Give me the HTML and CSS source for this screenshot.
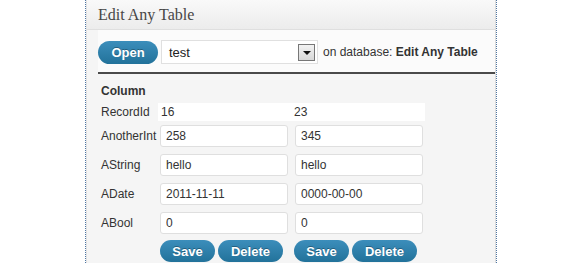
FILE: index.html
```html
<!DOCTYPE html>
<html>
<head>
  <title>Edit Any Table</title>
  <link rel="stylesheet" href="styles.css">
</head>
<body>
  <div class="frame">
    <div class="panel">
      <h3 class="panel-title">Edit Any Table</h3>

      <div class="toolbar">
        <button class="btn btn-open">Open</button>
        <div class="select">
          <span>test</span>
          <span class="select-arrow"></span>
        </div>
        <span class="db-label">on database: <b>Edit Any Table</b></span>
      </div>

      <div class="records">
        <div class="row row-head">
          <span class="label">Column</span>
        </div>
        <div class="row row-id">
          <span class="label">RecordId</span>
          <span class="id-cell">16</span>
          <span class="id-cell">23</span>
        </div>
        <div class="row">
          <span class="label">AnotherInt</span>
          <input type="text" value="258">
          <input type="text" value="345">
        </div>
        <div class="row">
          <span class="label">AString</span>
          <input type="text" value="hello">
          <input type="text" value="hello">
        </div>
        <div class="row">
          <span class="label">ADate</span>
          <input type="text" value="2011-11-11">
          <input type="text" value="0000-00-00">
        </div>
        <div class="row">
          <span class="label">ABool</span>
          <input type="text" value="0">
          <input type="text" value="0">
        </div>
        <div class="row row-actions">
          <span></span>
          <div class="actions">
            <button class="btn btn-save">Save</button>
            <button class="btn btn-delete">Delete</button>
          </div>
          <div class="actions actions-right">
            <button class="btn btn-save">Save</button>
            <button class="btn btn-delete">Delete</button>
          </div>
        </div>
      </div>
    </div>
  </div>
</body>
</html>
```

FILE: styles.css
```css
body {
  margin: 0;
  padding: 0;
  background: #fff;
  font-family: 'Liberation Sans', Arial, sans-serif;
  font-size: 12px;
  color: #333;
}

.frame {
  margin-left: 85px;
  width: 410px;
  border-left: 1px dotted #4f76a3;
  border-right: 1px dotted #4f76a3;
  min-height: 263px;
}

.panel {
  border-left: 1px solid #e2e2e2;
  border-right: 1px solid #dcdcdc;
  background: #f5f5f5;
  min-height: 263px;
}

.panel-title {
  margin: 0;
  height: 29px;
  line-height: 29px;
  padding-left: 11px;
  font-family: 'Liberation Serif', Georgia, serif;
  font-weight: normal;
  font-size: 16px;
  color: #464646;
  background: linear-gradient(#f9f9f9, #ececec);
  border-bottom: 1px solid #dfdfdf;
}

.toolbar {
  display: flex;
  align-items: center;
  padding: 10px 0 8px 0;
  margin-left: 11px;
  background: #fbfbfb;
  border-bottom: 2px solid #4a4a4a;
}

.btn {
  border: none;
  color: #fff;
  font-family: 'Liberation Sans', Arial, sans-serif;
  font-weight: bold;
  font-size: 13px;
  height: 22px;
  padding: 0;
  border-radius: 11px;
  background: linear-gradient(#3c8ebb, #22729a);
  text-shadow: 0 -1px 0 rgba(0, 0, 0, 0.3);
  cursor: pointer;
}

.btn-open {
  width: 60px;
  height: 23px;
  border-radius: 12px;
}

.select {
  display: flex;
  align-items: center;
  justify-content: space-between;
  box-sizing: border-box;
  width: 157px;
  height: 24px;
  margin-left: 3px;
  padding: 0 2px 0 7px;
  background: #fff;
  border: 1px solid #e0e0e0;
  font-size: 13px;
  color: #222;
}

.select-arrow {
  position: relative;
  box-sizing: border-box;
  width: 17px;
  height: 17px;
  border: 1px solid #777;
  background: linear-gradient(#f2f2f2, #d8d8d8);
}

.select-arrow::after {
  content: '';
  position: absolute;
  left: 4px;
  top: 6px;
  border-left: 4px solid transparent;
  border-right: 4px solid transparent;
  border-top: 4px solid #111;
}

.db-label {
  margin-left: 5px;
  font-size: 12px;
  color: #333;
}

.records {
  padding: 9px 0 0 14px;
}

.row {
  display: grid;
  grid-template-columns: 52px 128px 128px;
  column-gap: 7px;
  align-items: center;
  margin-bottom: 7px;
}

.row-head {
  height: 16px;
  margin-bottom: 4px;
}

.row-head .label {
  font-weight: bold;
  color: #333;
}

.row-id {
  grid-template-columns: 57px 133px 134px;
  column-gap: 0;
  height: 18px;
  margin-bottom: 4px;
}

.id-cell {
  height: 18px;
  line-height: 18px;
  padding-left: 3px;
  background: #fff;
  font-size: 12px;
}

.label {
  font-size: 12px;
  color: #333;
  white-space: nowrap;
}

input {
  box-sizing: border-box;
  width: 128px;
  height: 22px;
  padding: 0 5px;
  border: 1px solid #dfdfdf;
  border-radius: 3px;
  background: #fff;
  font-family: 'Liberation Sans', Arial, sans-serif;
  font-size: 12px;
  color: #333;
}

.row-actions {
  margin-top: -1px;
}

.actions {
  display: flex;
  gap: 3px;
}

.actions-right {
  margin-left: -1px;
}

.btn-save {
  width: 55px;
}

.btn-delete {
  width: 65px;
}
```
